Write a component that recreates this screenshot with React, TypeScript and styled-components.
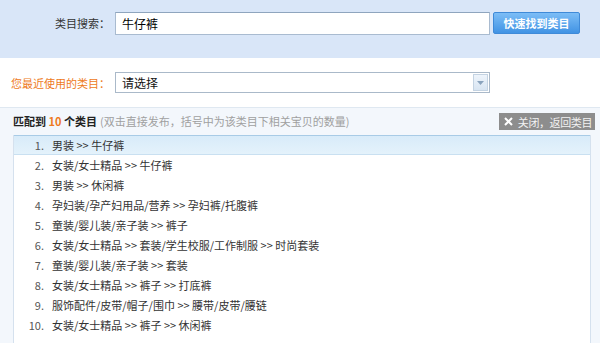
import styled, { createGlobalStyle } from "styled-components";

const GlobalStyle = createGlobalStyle`
  html, body {
    margin: 0;
    padding: 0;
    background: #f3f7fc;
  }
  body {
    font-family: "Noto Sans CJK SC", "Noto Sans", sans-serif;
    font-size: 11px;
    color: #333;
  }
`;

const results = [
  "男装 >> 牛仔裤",
  "女装/女士精品 >> 牛仔裤",
  "男装 >> 休闲裤",
  "孕妇装/孕产妇用品/营养 >> 孕妇裤/托腹裤",
  "童装/婴儿装/亲子装 >> 裤子",
  "女装/女士精品 >> 套装/学生校服/工作制服 >> 时尚套装",
  "童装/婴儿装/亲子装 >> 套装",
  "女装/女士精品 >> 裤子 >> 打底裤",
  "服饰配件/皮带/帽子/围巾 >> 腰带/皮带/腰链",
  "女装/女士精品 >> 裤子 >> 休闲裤",
];

function App() {
  return (
    <Page>
      <GlobalStyle />

      <SearchBand>
        <Label>类目搜索：</Label>
        <TextInput defaultValue="牛仔裤" />
        <SearchButton>快速找到类目</SearchButton>
      </SearchBand>

      <RecentBand>
        <Label $orange>您最近使用的类目：</Label>
        <Select>
          <SelectText>请选择</SelectText>
          <SelectArrow>
            <svg width="7" height="4" viewBox="0 0 7 4">
              <path d="M0 0 L7 0 L3.5 4 Z" fill="#8aa3bd" />
            </svg>
          </SelectArrow>
        </Select>
      </RecentBand>

      <ResultSection>
        <ResultHeader>
          <Summary>
            匹配到 <Count>10</Count> 个类目
            <Hint>(双击直接发布，括号中为该类目下相关宝贝的数量)</Hint>
          </Summary>
          <CloseButton>
            <CloseIcon width="9" height="9" viewBox="0 0 9 9">
              <path d="M1 1 L8 8 M8 1 L1 8" stroke="#fff" strokeWidth="2" />
            </CloseIcon>
            关闭，返回类目
          </CloseButton>
        </ResultHeader>

        <ResultList>
          {results.map((item, i) => (
            <ResultRow key={i} $active={i === 0}>
              <RowNum>{i + 1}.</RowNum>
              <RowText>{item}</RowText>
            </ResultRow>
          ))}
        </ResultList>
      </ResultSection>
    </Page>
  );
}

export default App;

/* Styled Components */

const Page = styled.div`
  width: 600px;
  height: 343px;
  overflow: hidden;
  display: flex;
  flex-direction: column;
`;

const SearchBand = styled.div`
  height: 58px;
  flex-shrink: 0;
  background: #d9e6f8;
  display: flex;
  align-items: center;
  padding-bottom: 12px;
  box-sizing: border-box;
`;

const Label = styled.div<{ $orange?: boolean }>`
  width: 115px;
  flex-shrink: 0;
  padding-right: 5px;
  box-sizing: border-box;
  text-align: right;
  font-size: 11px;
  color: ${(p) => (p.$orange ? "#ee7a22" : "#333")};
  white-space: nowrap;
`;

const TextInput = styled.input`
  width: 375px;
  height: 23px;
  flex-shrink: 0;
  box-sizing: border-box;
  border: 1px solid #a9bbd0;
  border-top-color: #8fa5be;
  padding: 0 6px;
  font-family: "Noto Sans CJK SC", sans-serif;
  font-size: 12px;
  color: #000;
  outline: none;
`;

const SearchButton = styled.button`
  margin-left: 3px;
  width: 87px;
  height: 22px;
  flex-shrink: 0;
  border: 1px solid #3f8ad8;
  border-radius: 2px;
  background: linear-gradient(#7cbdf6, #4193e4);
  color: #fff;
  font-family: "Noto Sans CJK SC", sans-serif;
  font-size: 11px;
  font-weight: bold;
  padding: 0;
`;

const RecentBand = styled.div`
  height: 50px;
  flex-shrink: 0;
  background: #fff;
  display: flex;
  align-items: center;
  border-bottom: 1px solid #dfe8f1;
  box-sizing: border-box;
`;

const Select = styled.div`
  width: 375px;
  height: 21px;
  flex-shrink: 0;
  box-sizing: border-box;
  border: 1px solid #aab9c9;
  background: #fff;
  display: flex;
  align-items: center;
  justify-content: space-between;
  padding: 0 1px 0 6px;
`;

const SelectText = styled.span`
  font-size: 12px;
  color: #111;
`;

const SelectArrow = styled.span`
  width: 15px;
  height: 17px;
  box-sizing: border-box;
  border: 1px solid #c4d3e2;
  background: linear-gradient(#eef4fb, #d8e5f2);
  display: flex;
  align-items: center;
  justify-content: center;
`;

const ResultSection = styled.div`
  flex: 1;
  background: #f3f7fc;
  padding: 2px 5px 0 13px;
  display: flex;
  flex-direction: column;
`;

const ResultHeader = styled.div`
  height: 22px;
  display: flex;
  align-items: center;
  justify-content: space-between;
`;

const Summary = styled.div`
  font-size: 11px;
  font-weight: bold;
  color: #222;
  white-space: nowrap;
`;

const Count = styled.span`
  color: #ee7a22;
`;

const Hint = styled.span`
  font-weight: normal;
  color: #a0a0a0;
  margin-left: 3px;
`;

const CloseButton = styled.div`
  height: 17px;
  box-sizing: border-box;
  background: #8d8d8d;
  color: #f2f2f2;
  font-size: 11px;
  letter-spacing: -0.4px;
  display: flex;
  align-items: center;
  gap: 5px;
  padding: 0 3px 0 5px;
  margin-top: 1px;
  white-space: nowrap;
  flex-shrink: 0;
`;

const CloseIcon = styled.svg`
  flex-shrink: 0;
`;

const ResultList = styled.div`
  flex: 1;
  margin-right: 4px;
  background: #fff;
  border-left: 1px solid #d5e1ee;
  border-right: 1px solid #d5e1ee;
  margin-top: 3px;
`;

const ResultRow = styled.div<{ $active?: boolean }>`
  height: 20px;
  display: flex;
  align-items: center;
  background: ${(p) => (p.$active ? "linear-gradient(#d8ebf9, #e4f2fb)" : "#fff")};
  border-top: 1px solid ${(p) => (p.$active ? "#a8cbe6" : "transparent")};
  border-bottom: 1px solid ${(p) => (p.$active ? "#c9e0f1" : "transparent")};
  box-sizing: border-box;
  font-size: 11px;
  color: #333;
  white-space: nowrap;
`;

const RowNum = styled.span`
  width: 30px;
  text-align: right;
  color: #555;
`;

const RowText = styled.span`
  margin-left: 8px;
`;
